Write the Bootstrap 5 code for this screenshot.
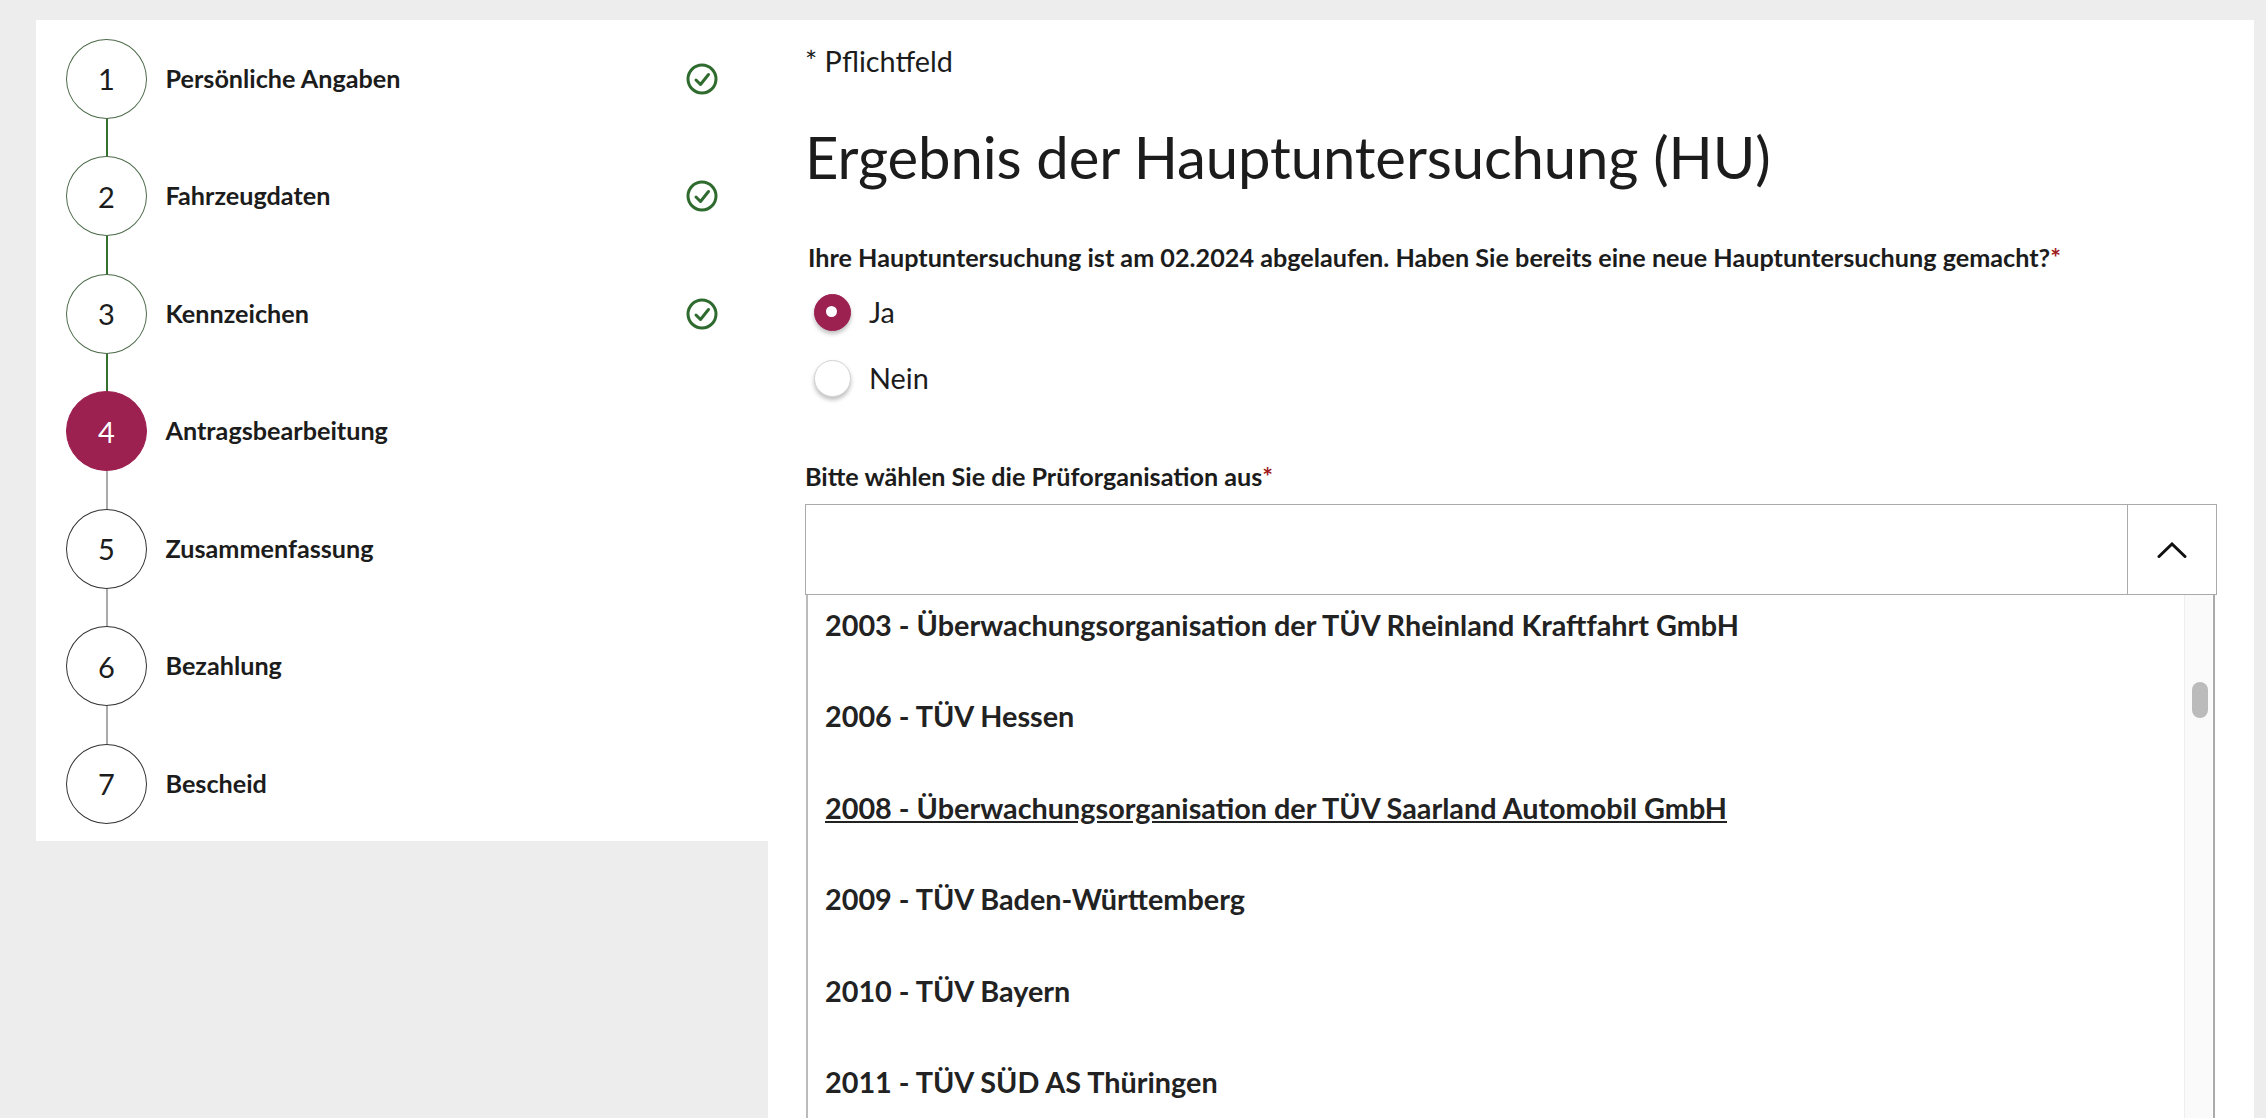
<!DOCTYPE html>
<html lang="de">
<head>
<meta charset="utf-8">
<title>Ergebnis der Hauptuntersuchung</title>
<link href="https://cdn.jsdelivr.net/npm/bootstrap@5.3.0/dist/css/bootstrap.min.css" rel="stylesheet">
<style>
html,body{height:100%;overflow:hidden}
body{background:#ededed;font-family:"Lato","Liberation Sans",sans-serif;color:#1c1c1c}
.shell{height:1118px;padding:20px 12px 0 36px;align-items:flex-start}
.side-panel{width:732px;height:821px;background:#fff;padding:0 0 0 30px;flex:none}
.main-panel{flex:1;height:1098px;background:#fff;padding:0 37px;overflow:hidden}
.step-row{height:117.5px;position:relative}
.step-circle{width:81px;height:80px;border-radius:50%;border:1px solid #4d6b4a;background:#fff;font-size:29px;flex:none;z-index:1}
.step-row.todo .step-circle{border-color:#333}
.step-row.now .step-circle{background:#9c2050;border-color:#9c2050;color:#fff}
.step-label{font-size:25.2px;font-weight:700;margin-left:18.5px;width:520.5px}
.step-row:not(:last-child)::after{content:"";position:absolute;left:39.5px;top:98px;height:40px;width:2px;background:#33702d}
.step-row.now::after,.step-row.todo::after{background:#aaa!important}
.req-note{font-size:28.8px;line-height:1;margin:27px 0 0}
.page-title{font-size:58px;font-weight:400;line-height:1;letter-spacing:-.1px;margin:52.5px 0 0;font-family:"Lato",sans-serif}
.q-label{font-size:25.2px;font-weight:700;margin:56px 0 7px 3px;line-height:30px}
.req-star{color:#a01c1c}
.radio-row{height:66px;margin-left:8.5px;font-size:28.8px}
.radio-dot{width:37px;height:37px;border-radius:50%;background:#fff;box-shadow:0 3px 4px rgba(0,0,0,.25);margin-right:18.5px;flex:none;border:1.5px solid #d4d4d4}
.radio-dot.on{background:#9c2050;border-color:#9c2050;position:relative}
.radio-dot.on::after{content:"";width:11px;height:11px;background:#fff;border-radius:50%;position:absolute;left:11.5px;top:11.5px}
.sel-label{font-size:25.2px;font-weight:700;line-height:30px;margin:50px 0 0}
.combo{height:91px;border:1px solid #aaa;margin-top:13px;width:1412px}
.combo-btn{width:89px;border-left:1px solid #aaa}
.drop{border-left:2px solid #bbb;border-right:2px solid #aaa;width:1409px;margin-left:1px;height:600px;overflow:hidden;position:relative}
.opt{height:91.6px;font-size:28.8px;font-weight:700;padding-left:17px;color:#222}
.first-opt{margin-top:-16px}
.track{position:absolute;right:1px;top:0;bottom:0;width:28px;background:#fafafa;border-left:1px solid #eee}
.thumb{position:absolute;left:7px;top:87px;width:16px;height:36px;border-radius:8px;background:#bbb}
</style>
</head>
<body>
<div class="shell d-flex">
  <aside class="side-panel">
    <div class="step-row d-flex align-items-center done"><div class="step-circle d-flex align-items-center justify-content-center">1</div><div class="step-label">Persönliche Angaben</div><svg width="32" height="32" viewBox="0 0 32 32" fill="none" stroke="#2f6b2f" stroke-width="3"><circle cx="16" cy="16" r="14"/><path d="M10 17l4.5 4.5 8-10" stroke-linecap="round" stroke-linejoin="round"/></svg></div>
    <div class="step-row d-flex align-items-center done"><div class="step-circle d-flex align-items-center justify-content-center">2</div><div class="step-label">Fahrzeugdaten</div><svg width="32" height="32" viewBox="0 0 32 32" fill="none" stroke="#2f6b2f" stroke-width="3"><circle cx="16" cy="16" r="14"/><path d="M10 17l4.5 4.5 8-10" stroke-linecap="round" stroke-linejoin="round"/></svg></div>
    <div class="step-row d-flex align-items-center done"><div class="step-circle d-flex align-items-center justify-content-center">3</div><div class="step-label">Kennzeichen</div><svg width="32" height="32" viewBox="0 0 32 32" fill="none" stroke="#2f6b2f" stroke-width="3"><circle cx="16" cy="16" r="14"/><path d="M10 17l4.5 4.5 8-10" stroke-linecap="round" stroke-linejoin="round"/></svg></div>
    <div class="step-row d-flex align-items-center now"><div class="step-circle d-flex align-items-center justify-content-center">4</div><div class="step-label">Antragsbearbeitung</div></div>
    <div class="step-row d-flex align-items-center todo"><div class="step-circle d-flex align-items-center justify-content-center">5</div><div class="step-label">Zusammenfassung</div></div>
    <div class="step-row d-flex align-items-center todo"><div class="step-circle d-flex align-items-center justify-content-center">6</div><div class="step-label">Bezahlung</div></div>
    <div class="step-row d-flex align-items-center todo"><div class="step-circle d-flex align-items-center justify-content-center">7</div><div class="step-label">Bescheid</div></div>
  </aside>
  <main class="main-panel">
    <p class="req-note">* Pflichtfeld</p>
    <h1 class="page-title">Ergebnis der Hauptuntersuchung (HU)</h1>
    <div class="q-label">Ihre Hauptuntersuchung ist am 02.2024 abgelaufen. Haben Sie bereits eine neue Hauptuntersuchung gemacht?<span class="req-star">*</span></div>
    <div class="radio-row d-flex align-items-center"><span class="radio-dot on"></span>Ja</div>
    <div class="radio-row d-flex align-items-center"><span class="radio-dot"></span>Nein</div>
    <div class="sel-label">Bitte wählen Sie die Prüforganisation aus<span class="req-star">*</span></div>
    <div class="combo d-flex justify-content-end">
      <div class="combo-btn d-flex align-items-center justify-content-center"><svg width="30" height="16" viewBox="0 0 30 16" fill="none" stroke="#111" stroke-width="3"><path d="M2 14.5L15 2 28 14.5" stroke-linecap="round"/></svg></div>
    </div>
    <div class="drop">
      <div class="first-opt"></div>
      <div class="opt d-flex align-items-center">2003 - Überwachungsorganisation der TÜV Rheinland Kraftfahrt GmbH</div>
      <div class="opt d-flex align-items-center">2006 - TÜV Hessen</div>
      <div class="opt d-flex align-items-center text-decoration-underline">2008 - Überwachungsorganisation der TÜV Saarland Automobil GmbH</div>
      <div class="opt d-flex align-items-center">2009 - TÜV Baden-Württemberg</div>
      <div class="opt d-flex align-items-center">2010 - TÜV Bayern</div>
      <div class="opt d-flex align-items-center">2011 - TÜV SÜD AS Thüringen</div>
      <div class="track"><div class="thumb"></div></div>
    </div>
  </main>
</div>
<script src="https://cdn.jsdelivr.net/npm/bootstrap@5.3.0/dist/js/bootstrap.bundle.min.js"></script>
</body>
</html>
